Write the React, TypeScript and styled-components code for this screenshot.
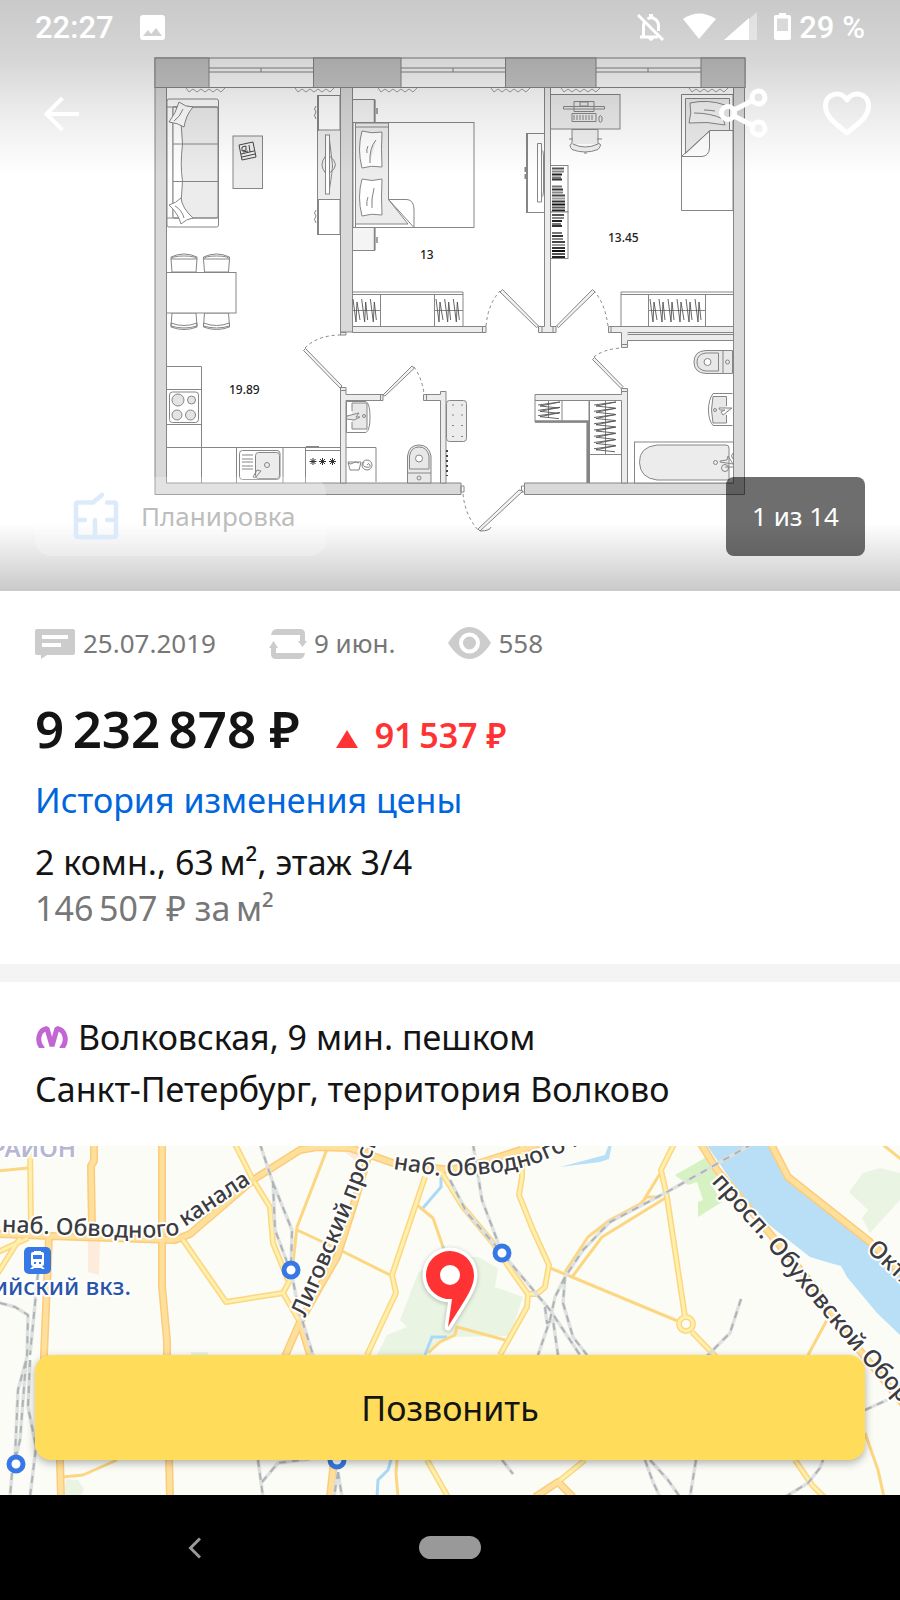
import React from "react";
import styled, { createGlobalStyle } from "styled-components";

const GlobalStyle = createGlobalStyle`
  * { box-sizing: border-box; }
  body {
    margin: 0;
    background: #fff;
    color: #141414;
    font-family: "Noto Sans", "Open Sans", sans-serif;
  }
  button { font-family: inherit; border: 0; padding: 0; background: none; cursor: pointer; }
  svg { display: block; }
`;

const Page = styled.div`
  min-height: 100vh;
  display: flex;
  flex-direction: column;
`;

/* Children share one grid cell, so controls sit over the picture. */
const Stack = styled.div`
  display: grid;
  > * { grid-area: 1 / 1; min-width: 0; }
`;

const Shade = styled.div`
  background:
    linear-gradient(to bottom, rgba(0, 0, 0, 0.21), rgba(0, 0, 0, 0.16) 60px, rgba(0, 0, 0, 0.08) 110px, rgba(0, 0, 0, 0) 175px),
    linear-gradient(to top, rgba(0, 0, 0, 0.21), rgba(0, 0, 0, 0) 68px);
`;

const HeroTop = styled.header`
  align-self: start;
  color: #fff;
`;

const StatusBar = styled.div`
  display: flex;
  align-items: center;
  height: 54px;
  padding: 0 35px;
  font-family: Roboto, sans-serif;
  font-size: 31px;
  font-weight: 500;
`;

const StatusIcons = styled.div`
  display: flex;
  align-items: center;
  gap: 8px;
  margin-left: auto;
`;

const ImageGlyph = styled.svg`
  margin-left: 26px;
`;

const Actions = styled.div`
  display: flex;
  align-items: center;
  padding: 30px 28px 0 40px;
`;

const IconButton = styled.button<{ $gap?: number; $push?: boolean }>`
  display: block;
  color: #fff;
  margin-left: ${(p) => (p.$push ? "auto" : `${p.$gap ?? 0}px`)};
`;

const HeroBottom = styled.div`
  align-self: end;
  display: flex;
  justify-content: space-between;
  padding: 0 35px 35px;
`;

const PlanButton = styled.button`
  display: flex;
  align-items: center;
  gap: 22px;
  height: 79px;
  padding: 0 30px 2px 38px;
  border-radius: 16px;
  background: rgba(255, 255, 255, 0.25);
  color: #bdbdbd;
  font-size: 26px;
`;

const Counter = styled.div`
  display: flex;
  align-items: center;
  height: 79px;
  padding: 0 26px 2px;
  border-radius: 8px;
  background: rgba(0, 0, 0, 0.57);
  color: #fff;
  font-size: 26px;
`;

const Section = styled.section<{ $top: number; $bottom: number }>`
  padding: ${(p) => p.$top}px 35px ${(p) => p.$bottom}px;
`;

const MetaRow = styled.div`
  display: flex;
  gap: 53px;
  height: 32px;
  margin-bottom: 40px;
`;

const MetaItem = styled.div<{ $gap: number }>`
  display: flex;
  align-items: center;
  gap: ${(p) => p.$gap}px;
  color: #777;
  font-size: 26px;
  line-height: 32px;
`;

const PriceRow = styled.div`
  display: flex;
  align-items: baseline;
  gap: 36px;
  height: 60px;
  margin-bottom: 18px;
  line-height: 58px;
`;

const Price = styled.h1`
  margin: 0;
  font-size: 51px;
  font-weight: 600;
`;

const PriceChange = styled.div`
  display: flex;
  align-items: baseline;
  gap: 17px;
  color: #ff3333;
  font-size: 34px;
  font-weight: 600;

  svg { margin-bottom: 4px; }
`;

const Line = styled.p<{ $gap?: number; $muted?: boolean }>`
  display: flex;
  align-items: center;
  gap: 10px;
  margin: ${(p) => p.$gap ?? 0}px 0 0;
  color: ${(p) => (p.$muted ? "#777" : "#141414")};
  font-size: 34px;
  line-height: 46px;
`;

const HistoryLink = styled.a`
  display: block;
  width: fit-content;
  color: #0066dd;
  font-size: 34px;
  line-height: 46px;
  text-decoration: none;
`;

const Divider = styled.hr`
  width: 100%;
  height: 18px;
  margin: 0;
  border: 0;
  background: #f4f4f4;
`;

const MapArea = styled(Stack)`
  flex: 1;
  min-height: 349px;
  overflow: hidden;
`;

const MapSvg = styled.svg`
  width: 100%;
  height: 100%;
`;

const CallButton = styled.button`
  align-self: end;
  height: 105px;
  margin: 0 35px 35px;
  border-radius: 16px;
  background: #ffdd5a;
  box-shadow: 0 3px 8px rgba(0, 0, 0, 0.3);
  color: #141414;
  font-size: 34px;
`;

const NavBar = styled.nav`
  display: grid;
  grid-template-columns: 388px 1fr 388px;
  align-items: center;
  height: 105px;
  background: #000;
  justify-items: center;
`;

const HomePill = styled.button`
  width: 62px;
  height: 23px;
  border-radius: 12px;
  background: #999;
`;

/* Thin space between digit groups; non-breaking space before the currency sign. */
const thin = "\u2009";
const nbsp = "\u00a0";

const wave = (x: number) =>
  `M${x} 88 l3 4 4 -3 4 3 4 -3 4 3 4 -3 4 3 4 -3 4 3 4 -4`;

const hatch = (x: number, y: number, w: number, h: number, n: number) => {
  let d = "";
  for (let i = 0; i < n; i++) {
    const a = x + (i * w) / n;
    d += `M${a} ${y} l3 ${h} l1 -${h - 3} ${i % 3 ? "l2" : "l3"} ${h - 5} `;
  }
  return d;
};

const hatchV = (x: number, y: number, w: number, h: number, n: number) => {
  let d = "";
  for (let i = 0; i < n; i++) {
    const b = y + (i * h) / n;
    d += `M${x} ${b + 3} l${w} -3 l-${w - 2} 4 l${w - 3} 2 `;
  }
  return d;
};

function Shelf({ y }: { y: number }) {
  const rows: [number, number, string][] = [
    [2, 12, "#555"], [5, 12, "#888"], [8, 10, "#222"], [11, 9, "#777"], [13, 10, "#333"],
    [20, 10, "#777"], [23, 11, "#333"], [26, 11, "#888"], [29, 13, "#444"], [32, 13, "#999"],
    [35, 13, "#333"], [38, 13, "#111"], [41, 13, "#555"], [44, 13, "#222"],
  ];
  return (
    <g>
      <rect x="550.5" y={y} width="17.5" height="46.5" fill="#fff" />
      {rows.map(([dy, w, c]) => (
        <rect key={dy} x="552" y={y + dy} width={w} height="2" fill={c} stroke="none" />
      ))}
    </g>
  );
}

function FloorPlan() {
  return (
    <svg viewBox="0 0 900 591" width="100%" role="img" aria-label="План квартиры">
      <rect width="900" height="591" fill="#fff" />
      <g stroke="#868686" strokeWidth="1" fill="none">
        {/* outer walls */}
        <rect x="155" y="58" width="590" height="29.5" fill="#fff" />
        <rect x="155" y="58" width="54" height="29.5" fill="#c9c9c9" />
        <rect x="313.500" y="58" width="87.500" height="29.5" fill="#c9c9c9" />
        <rect x="505.500" y="58" width="90.500" height="29.5" fill="#c9c9c9" />
        <rect x="701" y="58" width="44" height="29.5" fill="#c9c9c9" />
        <path d="M209 68H313M209 72H313M261 68v4M401 68H505M401 72H505M453 68v4M596 68H701M596 72H701M648 68v4" />
        <path d="M155 87.500H166.500V483H461V494.500H155Z" fill="#d9d9d9" />
        <path d="M744.500 87.500H733.500V483H524.500V494.500H744.500Z" fill="#d9d9d9" />
        {/* inner walls */}
        <path d="M340.500 87.500H352.500V332H340.500Z" fill="#d9d9d9" />
        <path d="M352.500 326.500H486V332.500H352.500ZM482.500 326.500v6" fill="#ececec" />
        <path d="M340.500 332.500h5.500v2.500h-5.500z" fill="#ececec" />
        <path d="M544.500 87.500H550.500V326.500H556V332.500H538.500V326.500H544.500ZM542 326.500v6M553 326.500v6" fill="#ececec" />
        <path d="M608.500 326.500H733.500V340.500H627.500V347.500H621.500V332.500H608.500ZM611 326.500v6M621.500 344.500h6" fill="#ececec" />
        <path d="M627.500 332.500H733M627.500 334.500H733" />
        <path d="M340.500 387.500H346V394.500H383V400.500H346V483H340.500ZM380.500 394.500v6M340.500 390.500h5.500" fill="#ececec" />
        <path d="M423.500 394.500H440.500V391.500H446V483H440.500V400.500H423.500ZM426.500 394.500v6" fill="#ececec" />
        <path d="M535 394.500H621.500V388.500H627.500V483H621.500V400.500H535ZM621.500 391.500h6" fill="#ececec" />
        <path d="M461 486h3v6h-3zM521.500 486h3v6h-3z" />
        {/* curtains */}
        <path d={[186, 295, 378, 491, 561, 689].map(wave).join("")} strokeWidth=".8" />
        {/* doors */}
        <g fill="#f2f2f2">
          <path d="M303.500 350.500l2-2L342 386l-2 2z" />
          <path d="M412 366l2.500 2L385 396l-2-1z" />
          <path d="M500 292l2.500-2.500L538.500 326l-2 1.500z" />
          <path d="M595 292l-2.500-2.500L556.500 326l2 1.500z" />
          <path d="M592.500 359.500l2-2L623 386.500l-2 2z" />
          <path d="M480 531l-2-2L519 490l4 1zM480 531q10 0 11-4" />
        </g>
        <path strokeDasharray="3 3" d="M305 348Q318 335 341 335M414 367Q422 378 424 394M486 326Q488 304 500 291M608 326Q605 303 594 291M594 357Q604 349 621 348M463 494Q465 515 478 530" />
        {/* living room */}
        <rect x="167" y="99" width="51.500" height="128" rx="2" fill="#fff" />
        <rect x="173" y="107" width="45" height="111" rx="2" fill="#ececec" />
        <path d="M182.500 107Q180 125 182.500 144Q180 165 182.500 181Q180 200 182.500 218H173V107Z" fill="#fff" />
        <path d="M173 144h45M173 181.500h45M167 107h51M167 218h51" />
        <path d="M179 102q6 5 14 5q-7 8-9 20q-6-4-15-5q7-9 10-20zM183 109q-3 8-9 12" fill="#fff" />
        <path d="M181 198q1 10 12 20q-7 1-12 6q-3-11-12-19q7-2 12-7zM175 206q7 4 9 12" fill="#fff" />
        <rect x="233" y="136" width="29.500" height="52.500" fill="#ececec" />
        <path d="M239 145l14-3 3 15-14 3zM242 147l4-1v4l-4 1zM249 145l1 7M241 154l13-3M242 157l13-3M243 152l5-1" stroke="#444" />
        <path d="M318 95.500h22v35h-22zM318 199.500h22v35h-22zM316 106q-3 3 0 6q-3 3 0 7M316 210q-3 3 0 6q-3 3 0 7" fill="#fff" />
        <rect x="317.500" y="130" width="23" height="69.500" fill="#ececec" />
        <path d="M318 95v36M318 199v36" strokeWidth="2" />
        <path d="M325.500 156q-7 9 0 17M329.500 156q12 9 0 17M329.500 140q3 25 3 25q0 5-3 24" />
        <rect x="325.500" y="135" width="4" height="59" fill="#fff" />
        <g fill="#fff">
          {[171, 203.5].map((x) => (
            <g key={x}>
              <path d={`M${x} 259v-2q13-6 26 0v2zM${x} 259q1-3 13-3t13 3l-1 13h-24z`} />
              <path d={`M${x + 1} 313h24l1 13q-13 4-26 0zM${x} 323q13 5 26 0v4q-13 5-26 0z`} />
            </g>
          ))}
        </g>
        <rect x="166.500" y="272.500" width="69.500" height="40.500" fill="#fff" />
        {/* kitchen */}
        <path d="M166.500 366.500H201.500V483M166.500 389.500H201.500M166.500 424.500H201.500M166.500 447.500H340.500M236.500 447.500V483M283 447.500V483M305.500 447V483M305.500 450.500H340M306 446.500h13" />
        <rect x="169.500" y="392" width="29" height="30.500" rx="3" />
        <g fill="#e4e4e4">
          <circle cx="178" cy="400" r="6" /><circle cx="191.500" cy="400" r="4" />
          <circle cx="177" cy="415" r="5" /><circle cx="190.500" cy="415" r="5" />
        </g>
        <rect x="239.500" y="450.500" width="40.500" height="29" rx="3" />
        <rect x="255.500" y="452.500" width="24" height="26" rx="3" fill="#ececec" />
        <circle cx="267" cy="465" r="2.500" />
        <path d="M242 455h11M242 459h11M242 462h11M242 466h11M242 469h11M253 477l4-7 4 1-6 7z" />
        <path d="M309.500 461.500h7M313 458v7M310.500 459l5 5M315.500 459l-5 5M319 461.500h7M322.500 458v7M320 459l5 5M325 459l-5 5M329 461.500h7M332.500 458v7M330 459l5 5M335 459l-5 5" stroke="#333" />
        {/* bedroom 13 */}
        <path d="M352.500 99.500H375V122.500H352.500ZM352.500 227.500H375V250.500H352.500Z" fill="#f4f4f4" />
        <path d="M374.500 100v22M374.500 228v22M377 108v6M377 237v6" strokeWidth="1.500" />
        <rect x="353" y="122.500" width="121" height="105" />
        <path d="M355.500 123V224H408L388.500 199.500V123Z" fill="#ececec" />
        <path d="M355.500 127H388M388.500 199.500H407Q414 200 414 210V227.500L388.500 199.500M355.500 224V227" />
        <path d="M362 131q10 3 20 1q-1 17 0 35q-11-2-20 1q-5-19 0-37zM376 140q-7 8-6 23M368 146q-2 4-1 7" fill="#fff" />
        <path d="M362 179q10 3 20 0q-1 18 0 36q-11-2-20 1q-5-19 0-37zM374 188q-3 12-2 20M368 197q-2 5-1 9" fill="#fff" />
        <path d="M526.500 133.500H544M526.500 212.500H544M537.500 143.500h4v58.500h-4zM541.500 150q2 0 2 6v35q0 6-2 6" />
        <path d="M527 133v80M525.500 167v5M525.500 174v5" strokeWidth="2" />
        <path d="M352.500 292H463V326M352.500 294.500H463M380.500 294V326M434.500 294V326M353 310.500H380M435 310.500H463M621 326V292H733M621 294.500H733M648.500 294V326M705.500 294V326M648 310.500H705" />
        <path d={hatch(353, 299, 26, 23, 3) + hatch(436, 299, 26, 23, 3) + hatch(650, 299, 54, 23, 6)} strokeWidth=".9" stroke="#555" />
        {/* room 13.45 */}
        <rect x="550.500" y="94.500" width="69.500" height="34.500" fill="#ececec" />
        <path d="M574 101.500h20v10h-20zM580 102h8v4h-8zM563.500 106.500h41v2.500h-41zM572 113.500h24v8h-24zM574 115v5M577 115v5M580 115v5M583 115v5M586 115v5M589 115v5M592 115v5M599 117q1-3 3 0v4q-2 3-3 0z" />
        <path d="M572 129.500h26v14q5 0 0 6q-13 5-26 0q-4-5 0-6zM573 144q12 6 25 0M569 139h4M597 139h5M584 153h3" fill="#f0f0f0" />
        <Shelf y={165.5} />
        <Shelf y={212} />
        <path d="M681.500 94.500H733V210.500H681.500Z" />
        <path d="M685.500 98.500H729.500V130.500H710L685.500 153.500Z" fill="#ececec" />
        <path d="M681.500 156.500L710 130.500H733M709.500 131V148Q709 156 702 156.500H681.500" />
        <path d="M690 103q18-4 35 2q-4 10 0 20q-18-4-36-2q3-10 1-20zM694 113q17 0 29 6M704 110q5 0 11 1" fill="#f4f4f4" />
        {/* bathrooms */}
        <path d="M346.500 401.500H366Q370 404 370 417T366 432.500H346.500Z" fill="#fff" />
        <path d="M352 403H367V429H352V422M352 411V403M347 416l12-3-3 4h4l-6 3-8-1z" fill="#e8e8e8" />
        <circle cx="364" cy="416" r="1.500" />
        <path d="M346 447.500H376V482M348 462l2 8h9l2-8zM348 463q3 2 5 0t6 0" />
        <circle cx="367" cy="465" r="5" />
        <path d="M367 465q2-3 3 0t-4 2t-2-5" />
        <path d="M407.500 483V456Q409 445 419 445T431 456V483ZM409.500 469V456Q411 447 419 447T429 456V469ZM407.500 473H431" fill="#e8e8e8" />
        <circle cx="419" cy="458.500" r="3.500" fill="#fff" /><circle cx="419" cy="478" r="2" />
        <rect x="446.500" y="400.500" width="20" height="41" rx="3" fill="#ececec" />
        <path d="M452 405h2M461 405h2M452 415h2M461 415h2M452 425.500h2M461 425.500h2M452 436.500h2M461 436.500h2" />
        <path d="M447 450v26" strokeDasharray="2 3" strokeWidth="2" stroke="#444" />
        <path d="M535 400.500H589V422H535ZM562 400.500V422M548.500 400V418M589.500 400V483M587 423V483M589 454.500H621M605.500 400.500V454" />
        <path d="M535 421.500H588V483" strokeWidth="2.500" />
        <path d={hatchV(538, 402, 22, 16, 3) + hatchV(594, 402, 22, 50, 8)} stroke="#555" strokeWidth=".9" />
        <path d="M732.500 350.500V373.500H706Q694 373 694 362T706 350.500ZM718.500 353V371H706Q697 370 697 362T706 353ZM723 350.500V373.500" fill="#e8e8e8" />
        <circle cx="707.500" cy="362" r="3.500" fill="#fff" /><circle cx="727.500" cy="362" r="2" />
        <path d="M732.500 393.500H713Q708.500 400 708.500 410T713 425.500H732.500" fill="#fff" />
        <path d="M726.500 406V396.500H713Q710 410 713 423H726.500V415M719 408h13l-9 7-2-3 4-2h-5z" fill="#e8e8e8" />
        <circle cx="715" cy="410" r="1.500" />
        <rect x="634.500" y="442" width="99" height="41" fill="#fff" />
        <path d="M657 445H726Q729 445 729 448V480H657Q640 478 639.500 462.500T657 445Z" fill="#ececec" />
        <circle cx="715.500" cy="462.500" r="2" /><circle cx="725" cy="468" r="3.500" />
        <path d="M720 461l7-1 1-4 5 8-13-2zM725 467h8M733 453q-3 3 0 6" />
      </g>
      <g fontSize="12" fontWeight="500" fill="#222">
        <text x="420" y="259">13</text>
        <text x="608" y="242">13.45</text>
        <text x="229" y="394">19.89</text>
      </g>
    </svg>
  );
}

const majorRoads = [
  "M162 -2V140L167 195V230L170 351",
  "M94 -2V15L91 20L92 85",
  "M-2 88L50 90L175 94L190 88L253 34L300 4L317 1L350 2L393 17L450 24L480 17L527 2L550 -6",
  "M372 -2L353 61L337 111L322 137L300 176L283 215M300 176L312 215",
  "M49 90L44 209V270L60 314L61 351",
  "M701 -2L717 24L767 84L817 144L848 190L905 260",
  "M771 -2L788 31L870 96L905 130",
  "M333 314V324L330 351M535 351L558 336L573 351",
];
const minorRoads = [
  "M30 -2L31 85M20 92L-2 127M28 92L-2 106",
  "M181 91L226 156L283 147L290 134M283 147L300 176",
  "M235 -2L252 32L270 61L273 97L288 134",
  "M425 31L392 129L396 147L367 209",
  "M440 24L463 61L493 97L513 127L528 148H537L545 141L549 119L533 84L519 49L522 31V-2M528 148L527 161L500 209",
  "M674 -2L661 24L667 51L685 171M692 186L719 214",
  "M427 314L448 351M585 314L558 336M795 314L812 339L824 351",
];
const smallRoads = [
  "M-2 25L28 22M329 -2L297 81L293 117M297 84L340 104L390 129",
  "M417 59L433 72L443 101M63 331L83 329L117 314M397 314L396 327L398 351",
  "M428 207L440 196L455 189L457 181L505 194",
  "M550 122L572 131L680 176M661 26L642 57M667 51L602 91L572 131M565 126L588 91L610 74L640 58L647 51H660",
  "M882 -2L902 14M827 174L808 209M865 287L878 324L884 351",
];
const railways =
  "M260 -2L273 37L275 84L290 124M273 37L292 84L291 124L298 161L313 209" +
  "M38 127L30 209M0 157L15 161L28 169L27 211L18 244L15 311M26 215L20 294L16 311M30 214L28 261L36 301L30 351M12 327L10 351" +
  "M258 314L263 351M262 336L278 317L310 313M338 326L334 351M338 326L342 351" +
  "M752 -2L667 46L610 76L583 104L565 131L555 151L550 174L538 209M565 131L563 157L573 191L587 209M473 -2L482 54L502 107L550 164L580 209M450 34L467 67L502 107M545 161L547 177L553 174L558 209" +
  "M741 153L730 187L705 212M502 314L513 328M645 314L653 336L660 351M650 314L668 334L680 351M696 314L690 351M785 351L808 337L820 322L823 314M865 264L887 254L902 237";

function CityMap() {
  return (
    <MapSvg viewBox="0 0 900 349" preserveAspectRatio="xMidYMid slice" role="img" aria-label="Карта">
      <defs>
        <path id="canalWest" d="M2 86Q50 88 112 91Q160 94 190 86" />
        <path id="canalWestUp" d="M185 81L268 26" />
        <path id="ligovsky" d="M305 172L333 108L352 62L380 -12" />
        <path id="canalEast" d="M393 23L440 30Q500 30 535 18L605 -12" />
        <path id="obukhov" d="M711 36L757 88L848 198L920 279" />
        <path id="oktyabr" d="M866 104L930 164" />
      </defs>
      <rect width="900" height="349" fill="#fbfcf6" />
      <path fill="#e9f4e3" d="M418 127L400 174L407 181L387 189L377 209H425L447 191L510 190L523 151L495 141L498 122L478 111H440ZM849 46L863 27L880 22L900 27V54L870 87L862 72L868 64ZM66 333L78 334L84 343L80 351H64ZM191 206h17v6h-17z" />
      <path fill="#d7f2c2" d="M675 29L705 12L717 31L711 38L722 56L698 71V56L703 54L697 36L688 39Z" />
      <path fill="#fdebdc" d="M88 95h12l-1 34-11-3zM345 6h14v12z" />
      <path fill="#b8dff6" d="M706 -2H771L788 31L870 96L902 127V191L877 167L847 131L841 120L830 117L810 111L763 74L733 37ZM560 21L605 9L609 -2H612L609 13L600 16Z" />
      <path fill="none" stroke="#a9d9f5" strokeWidth="3" d="M350 3L392 15M441 31V41L423 62M443 100L452 151M447 191H432L425 209M391 314L388 324L378 334L377 351" />
      <g fill="none" strokeLinejoin="round">
        <path d={smallRoads.join("")} stroke="#fdd681" strokeWidth="3" />
        <path d={minorRoads.join("")} stroke="#fdd681" strokeWidth="6" />
        <path d={majorRoads.join("")} stroke="#fccb7c" strokeWidth="8" />
        <circle cx="686" cy="178" r="7" stroke="#fdd681" strokeWidth="6" />
        <path d={minorRoads.join("")} stroke="#fff0ab" strokeWidth="3" />
        <circle cx="686" cy="178" r="7" stroke="#fff0ab" strokeWidth="3" />
        <path d={majorRoads.join("")} stroke="#ffe09a" strokeWidth="5" />
        <path d={railways} stroke="#dfe1e1" strokeWidth="3.500" />
        <path d={railways} stroke="#aeb3b5" strokeWidth="2" strokeDasharray="7 6" />
      </g>
      <g fill="#fff" stroke="#3679e6" strokeWidth="5">
        {[[291, 124], [502, 107], [16, 318], [337, 314]].map(([x, y]) => (
          <circle key={x} cx={x} cy={y} r="7" />
        ))}
      </g>
      <g fontSize="24" fill="#3c3c40" stroke="#fff" strokeWidth="4" strokeLinejoin="round" paintOrder="stroke" fontWeight="500">
        <text fontSize="23"><textPath href="#canalWest">наб. Обводного</textPath></text>
        <text fontSize="23"><textPath href="#canalWestUp">канала</textPath></text>
        <text fontSize="23"><textPath href="#ligovsky">Лиговский просп.</textPath></text>
        <text fontSize="23"><textPath href="#canalEast">наб. Обводного ка</textPath></text>
        <text><textPath href="#obukhov">просп. Обуховской Обороны</textPath></text>
        <text><textPath href="#oktyabr">Октябрьская</textPath></text>
        <text x="76" y="11" textAnchor="end" fontWeight="600" fill="#b6b6d2">РАЙОН</text>
        <text x="131" y="149" textAnchor="end" fill="#2a55a8">Балтийский вкз.</text>
      </g>
      <rect x="24" y="101" width="27" height="27" rx="5" fill="#3679e6" />
      <path fill="#fff" fillRule="evenodd" d="M34 105h7v1h1q2 0 2 2v10q0 2-2 2l3 3h-3l-1-1h-7l-1 1h-3l3-3q-2 0-2-2v-10q0-2 2-2h1zM33 109v4h9v-4zM34 116v2h2v-2zM39 116v2h2v-2z" />
      <path
        d="M452 153A24 24 0 1 1 474 129C474 142 466 152 448 181Z"
        fill="#ff3333" stroke="#fff" strokeWidth="7" strokeLinejoin="round" paintOrder="stroke"
        filter="drop-shadow(0 1px 2px rgba(0,0,0,.25))"
      />
      <circle cx="450" cy="129" r="10" fill="#fff" />
    </MapSvg>
  );
}

function StatusImage() {
  return (
    <ImageGlyph width="25" height="25" viewBox="0 0 25 25" aria-hidden="true">
      <path fill="#fff" fillRule="evenodd" d="M3 0H22Q25 0 25 3V22Q25 25 22 25H3Q0 25 0 22V3Q0 0 3 0ZM3 21H22L16 13L11 19L8 15Z" />
    </ImageGlyph>
  );
}

function StatusGlyphs() {
  return (
    <svg width="154" height="30" viewBox="0 0 154 30" aria-hidden="true">
      <g fill="none" stroke="#fff" strokeWidth="3">
        <path d="M1 3L26 28" />
        <path d="M3 25H21M6.500 24V14Q6.500 11 8 9.500M10.500 7Q13 5 16 6Q21 8 21.500 13V19" />
        <path d="M14 2V6" strokeWidth="4" />
      </g>
      <path fill="#fff" d="M11 26h6q-1 3-3 3t-3-3zM46 7Q62 -4 79 7L62 27Z" />
      <path fill="#fff" fillOpacity=".4" d="M120 0V28H112V7Z" />
      <path fill="#fff" d="M87 28L112 6V28Z" />
      <path fill="#fff" d="M142 1h7v2h3q2 0 2 2V26q0 2-2 2H139q-2 0-2-2V5q0-2 2-2h3z" />
      <path fill="#d9d9d9" d="M140 6.500H151V19H140Z" />
    </svg>
  );
}

export default function App() {
  return (
    <Page>
      <GlobalStyle />
      <Stack>
        <FloorPlan />
        <Shade />
        <HeroTop>
          <StatusBar>
            <span>22:27</span>
            <StatusImage />
            <StatusIcons>
              <StatusGlyphs />
              <span>29&nbsp;%</span>
            </StatusIcons>
          </StatusBar>
          <Actions>
            <IconButton aria-label="Назад">
              <svg width="44" height="60" viewBox="0 0 44 60" fill="none" stroke="currentColor" strokeWidth="4">
                <path d="M39 30H6M22.500 14L6.500 30L22.500 46" />
              </svg>
            </IconButton>
            <IconButton $push aria-label="Поделиться">
              <svg width="52" height="52" viewBox="0 0 52 52" fill="none" stroke="currentColor" strokeWidth="5">
                <circle cx="12" cy="25" r="6.500" />
                <circle cx="42.500" cy="9.500" r="6.500" />
                <circle cx="42.500" cy="40.500" r="6.500" />
                <path d="M18 22L36.500 12.500M18 28L36.500 37.500" />
              </svg>
            </IconButton>
            <IconButton $gap={54} aria-label="В избранное">
              <svg width="50" height="48" viewBox="0 0 50 48" fill="none" stroke="currentColor" strokeWidth="5" strokeLinejoin="round">
                <path d="M25 43C16 35 3.500 28 3.500 16C3.500 3 19 0 25 10C31 0 46.500 3 46.500 16C46.500 28 34 35 25 43Z" />
              </svg>
            </IconButton>
          </Actions>
        </HeroTop>
        <HeroBottom>
          <PlanButton>
            <svg width="46" height="48" viewBox="0 0 46 48" fill="none" stroke="#dcebfa" strokeWidth="4.500" strokeLinecap="round" strokeLinejoin="round">
              <path d="M29 3L20 10.500H5Q3 10.500 3 12.500V43Q3 45 5 45H41Q43 45 43 43V12.500Q43 10.500 41 10.500H34M3 28H12M43 28H34M22 28V45" />
            </svg>
            Планировка
          </PlanButton>
          <Counter>1 из 14</Counter>
        </HeroBottom>
      </Stack>

      <Section $top={36} $bottom={33}>
        <MetaRow>
          <MetaItem $gap={7}>
            <svg width="41" height="32" viewBox="0 0 41 32">
              <path fill="#ccc" fillRule="evenodd" d="M2 2H38Q40 2 40 4V26Q40 28 38 28H12L6 32V28H2Q0 28 0 26V4Q0 2 2 2ZM7 8V12H33V8ZM7 16V20H26V16Z" />
            </svg>
            25.07.2019
          </MetaItem>
          <MetaItem $gap={7}>
            <svg width="38" height="32" viewBox="0 0 38 32">
              <path fill="#ccc" d="M2 8Q3 2 8 2H31Q36 2 36 7V14H38L33.500 20L29 14H31V8ZM36 26Q35 32 30 32H7Q2 32 2 27V21H0L4.500 14L9 21H7V26Z" />
            </svg>
            9 июн.
          </MetaItem>
          <MetaItem $gap={7}>
            <svg width="43" height="32" viewBox="0 0 43 32">
              <path fill="#ccc" d="M0 16Q10 0 21.500 0T43 16Q33 32 21.500 32T0 16Z" />
              <circle cx="21.500" cy="16" r="8.500" fill="#ccc" stroke="#fff" strokeWidth="4" />
            </svg>
            558
          </MetaItem>
        </MetaRow>
        <PriceRow>
          <Price>{`9${thin}232${thin}878${nbsp}₽`}</Price>
          <PriceChange>
            <svg width="22" height="18" viewBox="0 0 22 18" role="img" aria-label="Цена выросла">
              <path d="M11 0L22 18H0Z" fill="currentColor" />
            </svg>
            {`91${thin}537${nbsp}₽`}
          </PriceChange>
        </PriceRow>
        <HistoryLink href="#history">История изменения цены</HistoryLink>
        <Line $gap={16}>{`2 комн., 63${thin}м², этаж 3/4`}</Line>
        <Line $muted>{`146${thin}507${nbsp}₽ за${thin}м²`}</Line>
      </Section>
      <Divider />
      <Section $top={32} $bottom={34}>
        <Line>
          <svg width="33" height="22" viewBox="0 0 33 22" fill="none" stroke="#c266d4" strokeWidth="5" aria-hidden="true">
            <path d="M8 23C1 16 3 4 12 2.500L17 20L22 2.500C31 4 33 16 26 23" strokeLinejoin="bevel" />
          </svg>
          Волковская, 9 мин. пешком
        </Line>
        <Line $gap={6}>Санкт-Петербург, территория Волково</Line>
      </Section>

      <MapArea>
        <CityMap />
        <CallButton>Позвонить</CallButton>
      </MapArea>

      <NavBar>
        <IconButton aria-label="Назад">
          <svg width="14" height="24" viewBox="0 0 14 24" fill="none" stroke="#999" strokeWidth="3">
            <path d="M13 2.500L3.500 12L13 21.500" />
          </svg>
        </IconButton>
        <HomePill aria-label="Домой" />
      </NavBar>
    </Page>
  );
}
